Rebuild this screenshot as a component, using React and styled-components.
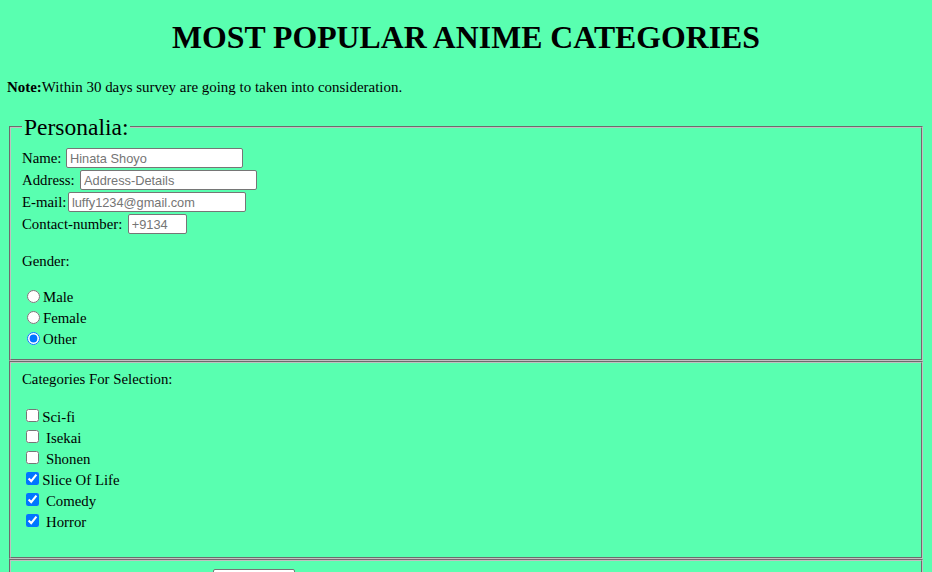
import React from "react";
import styled, { createGlobalStyle } from "styled-components";

const GlobalStyle = createGlobalStyle`
  html, body {
    margin: 0;
    padding: 0;
    background: #59ffb0;
  }
  body {
    font-family: "Liberation Serif", "Times New Roman", serif;
    color: #000;
  }
`;

const Page = styled.main`
  display: flow-root;
  padding: 0 7px;
  font-size: 14.8px;
  min-height: 100vh;
  box-sizing: border-box;
`;

const Title = styled.h1`
  margin: 19.5px 0 0;
  font-size: 31.8px;
  line-height: 36px;
  font-weight: bold;
  text-align: center;
`;

const Note = styled.p`
  margin: 23px 0 0;
  line-height: 17px;
  font-size: 14.95px;
`;

const Fieldset = styled.fieldset`
  margin: ${(p) => p.$top || 0}px 2px 0;
  padding: ${(p) => p.$pt}px 11px ${(p) => p.$pb}px;
  border: 2px groove #c0c0c0;
  min-width: 0;
`;

const Legend = styled.legend`
  padding: 0 2px;
  font-family: "Liberation Serif", "Times New Roman", serif;
  font-size: 23.5px;
  line-height: 27px;
`;

const Row = styled.div`
  display: flex;
  align-items: center;
  height: 22px;
  gap: ${(p) => (p.$gap ?? 4.5)}px;
`;

const Label = styled.label`
  line-height: 17px;
  white-space: nowrap;
`;

const TextInput = styled.input`
  box-sizing: border-box;
  width: ${(p) => p.$w}px;
  height: 20px;
  margin: 0 0 0 ${(p) => p.$offset || 0}px;
  padding: 0 3px;
  border: 1px solid #767676;
  border-radius: 2px;
  background: #fff;
  font-family: "Liberation Sans", Arial, sans-serif;
  font-size: 12.8px;
  color: #000;
  &::placeholder {
    color: #757575;
  }
`;

const Prompt = styled.p`
  margin: ${(p) => p.$top}px 0 0;
  line-height: 17px;
`;

const OptionList = styled.div`
  display: flex;
  flex-direction: column;
  margin-top: ${(p) => p.$top}px;
`;

const OptionRow = styled.label`
  display: flex;
  align-items: flex-start;
  height: 21px;
`;

const Radio = styled.input.attrs({ type: "radio" })`
  width: 13px;
  height: 13px;
  margin: 3px 3px 0 5px;
  flex: none;
`;

const Checkbox = styled.input.attrs({ type: "checkbox" })`
  width: 13px;
  height: 13px;
  margin: 2.5px 3.3px 0 4px;
  flex: none;
`;

const OptionText = styled.span`
  margin-top: 2px;
  margin-left: ${(p) => (p.$indent ? 3.7 : 0)}px;
  line-height: 17px;
  white-space: nowrap;
`;

const genders = [
  { label: "Male" },
  { label: "Female" },
  { label: "Other", checked: true },
];

const categories = [
  { label: "Sci-fi" },
  { label: "Isekai", indent: true },
  { label: "Shonen", indent: true },
  { label: "Slice Of Life", checked: true },
  { label: "Comedy", indent: true, checked: true },
  { label: "Horror", indent: true, checked: true },
];

export default function App() {
  return (
    <>
      <GlobalStyle />
      <Page>
        <Title>MOST POPULAR ANIME CATEGORIES</Title>
        <Note>
          <b>Note:</b>Within 30 days survey are going to taken into consideration.
        </Note>
        <form onSubmit={(e) => e.preventDefault()}>
          <Fieldset $top={18} $pt={6.5} $pb={8.8}>
            <Legend>Personalia:</Legend>
            <Row>
              <Label htmlFor="name">Name:</Label>
              <TextInput id="name" $w={177} placeholder="Hinata Shoyo" />
            </Row>
            <Row $gap={5.4}>
              <Label htmlFor="address">Address:</Label>
              <TextInput id="address" $w={177} placeholder="Address-Details" />
            </Row>
            <Row $gap={1.5}>
              <Label htmlFor="email">E-mail:</Label>
              <TextInput id="email" $w={178} placeholder="luffy1234@gmail.com" />
            </Row>
            <Row $gap={5.5}>
              <Label htmlFor="contact">Contact-number:</Label>
              <TextInput id="contact" $w={59} placeholder="+9134" />
            </Row>
            <Prompt $top={18}>Gender:</Prompt>
            <OptionList $top={17.2}>
              {genders.map((g) => (
                <OptionRow key={g.label}>
                  <Radio name="gender" defaultChecked={!!g.checked} />
                  <OptionText>{g.label}</OptionText>
                </OptionRow>
              ))}
            </OptionList>
          </Fieldset>
          <Fieldset $pt={8.5} $pb={24.2}>
            <Prompt $top={0}>Categories For Selection:</Prompt>
            <OptionList $top={18.3}>
              {categories.map((c) => (
                <OptionRow key={c.label}>
                  <Checkbox defaultChecked={!!c.checked} />
                  <OptionText $indent={c.indent}>{c.label}</OptionText>
                </OptionRow>
              ))}
            </OptionList>
          </Fieldset>
          <Fieldset $pt={7} $pb={9}>
            <Row>
              <TextInput aria-label="Favourite" $w={82} $offset={191} />
            </Row>
          </Fieldset>
        </form>
      </Page>
    </>
  );
}
